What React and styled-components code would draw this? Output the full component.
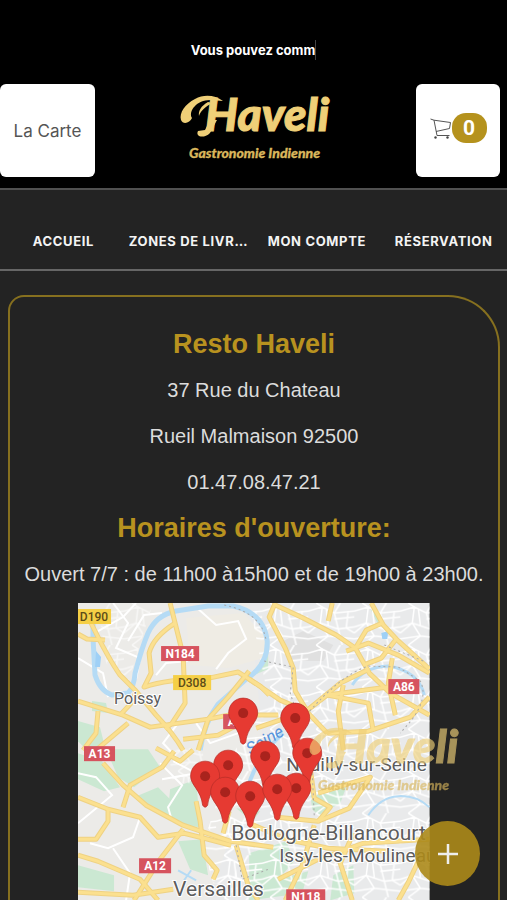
import styled, { createGlobalStyle } from "styled-components";

const GlobalStyle = createGlobalStyle`
  * {
    box-sizing: border-box;
  }
  body {
    margin: 0;
    background-color: #232323;
  }
`;

const Page = styled.div`
  display: flex;
  flex-direction: column;
  height: 100vh;
  overflow: hidden;
  background-color: #232323;
  font-family: Inter, "Liberation Sans", sans-serif;
`;

const Header = styled.header`
  background-color: black;
  border-bottom: 2px solid #505050;
  padding: 40px 0px 11px;
`;

const Announcement = styled.p`
  display: flex;
  justify-content: center;
  margin: 0px 0px 24px;
  color: white;
  font-size: 13px;
  font-weight: 700;
  line-height: 20px;
`;

const Caret = styled.span`
  width: 1px;
  background-color: #444;
`;

const HeaderRow = styled.div`
  display: grid;
  grid-template-columns: 1fr auto 1fr;
  align-items: start;
`;

const TileButton = styled.button`
  display: flex;
  align-items: center;
  justify-content: center;
  justify-self: ${(props) => props.$side};
  width: ${(props) => (props.$side === "start" ? "95px" : "84px")};
  height: 93px;
  margin-right: ${(props) => (props.$side === "start" ? "0px" : "7px")};
  padding: ${(props) => (props.$side === "start" ? "0px" : "0px 0px 5px")};
  border: none;
  border-radius: 6px;
  background-color: white;
  color: #555;
  font-family: inherit;
  font-size: 17px;
`;

const Count = styled.span`
  width: 35px;
  border-radius: 14px;
  background-color: #b5921d;
  color: white;
  font-family: Roboto, sans-serif;
  font-size: 21px;
  font-weight: 700;
  line-height: 30px;
`;

const LogoLink = styled.a`
  display: block;
  margin-top: 9px;
  height: 70px;
`;

const FloatingLogo = styled.div`
  position: fixed;
  right: 49px;
  bottom: 105px;
  height: 70px;
  opacity: 0.65;
`;

const Nav = styled.nav`
  display: grid;
  grid-template-columns: repeat(4, 1fr);
  padding: 39px 0px 15px;
  border-bottom: 2px solid #666;
`;

const NavLink = styled.a`
  padding: 0px 2px;
  overflow: hidden;
  text-overflow: ellipsis;
  white-space: nowrap;
  text-align: center;
  text-decoration: none;
  color: #f4f4f4;
  font-size: 13px;
  font-weight: 700;
  letter-spacing: 0.05em;
  line-height: 25px;
`;

const Card = styled.main`
  flex: 1;
  min-height: 0;
  display: flex;
  flex-direction: column;
  align-items: center;
  margin: 24px 7px 0px 8px;
  padding-top: 24px;
  border: 2px solid #86701f;
  border-bottom: none;
  border-radius: 16px 52px 0px 0px;
  font-family: "Liberation Sans", sans-serif;
  text-align: center;
`;

const Title = styled.h2`
  margin: 0;
  color: #b8921f;
  font-size: 27px;
  line-height: 46px;
`;

const Info = styled.p`
  margin: 0;
  color: #dcdcdc;
  font-size: 20px;
  line-height: 46px;
`;

const MapFrame = styled.div`
  flex: 1;
  min-height: 0;
  width: 72%;
  margin-top: 6px;

  svg {
    display: block;
    width: 100%;
    height: 100%;
  }
`;

const AddButton = styled.button`
  position: fixed;
  right: 27px;
  bottom: 14px;
  display: flex;
  align-items: center;
  justify-content: center;
  width: 65px;
  height: 65px;
  padding: 0;
  border: none;
  border-radius: 50%;
  background-color: rgba(172, 138, 26, 0.9);
`;

const navItems = ["ACCUEIL", "ZONES DE LIVRAISON", "MON COMPTE", "RÉSERVATION"];

const pins = [
  [165, 110],
  [217, 115],
  [229, 150],
  [187, 153],
  [150, 162],
  [127, 173],
  [147, 189],
  [172, 193],
  [218, 185],
  [199, 186],
];

const badges = [
  { text: "D190", x: -1, y: 6, w: 34, yellow: true },
  { text: "N184", x: 83, y: 43, w: 38 },
  { text: "D308", x: 95, y: 72, w: 38, yellow: true },
  { text: "A86", x: 310, y: 76, w: 31 },
  { text: "A", x: 145, y: 111, w: 17 },
  { text: "A13", x: 6, y: 143, w: 31 },
  { text: "A12", x: 61, y: 255, w: 32 },
  { text: "N118", x: 208, y: 286, w: 39 },
];

const towns = [
  { text: "Poissy", x: 36, y: 101, size: 16 },
  { text: "Neuilly-sur-Seine", x: 208, y: 168, size: 19 },
  { text: "Boulogne-Billancourt", x: 153, y: 237, size: 21 },
  { text: "Issy-les-Moulineaux", x: 201, y: 259, size: 19 },
  { text: "Versailles", x: 95, y: 293, size: 21 },
];

const majorRoads = [
  // north west
  "M13 20 Q30 55 42 72 L58 88 L78 112 Q95 130 105 147",
  "M0 31 L9 36 L27 37",
  "M92 0 L97 20 L105 52 L107 100 L94 120 L87 126",
  "M97 20 Q75 34 71 50 L73 70 L66 84 Q90 76 126 76 L160 69 L182 83 L191 92",
  "M0 98 L45 112 L72 124 L130 116 L150 112 L200 112",
  "M20 108 L18 130 L5 147",
  "M42 112 L55 98 L58 88",
  "M105 136 L140 132 L178 112",
  "M171 68 L150 94 L130 116 L120 147",
  "M50 120 L18 147",
  // north east
  "M197 0 L191 14 L207 45 L215 65 L217 88 L230 110",
  "M197 2 L225 15 L258 32 L277 45 L291 70 L312 90 L351 112",
  "M254 0 L250 18",
  "M293 0 L305 22 L318 36 L351 66",
  "M304 20 L288 27 L276 47",
  "M268 48 L290 40 L320 52 L351 70",
  "M318 36 L303 55 L285 62",
  "M171 76 L202 97 L228 108 L249 130",
  "M178 125 L228 108 L262 80 L291 66",
  "M228 108 L249 92 L310 84 L330 80",
  "M265 82 L260 108 L265 147",
  "M314 55 L310 80 L317 112",
  "M351 94 L332 114 L290 128 L249 130",
  "M249 92 L290 100 L295 128",
  // south west
  "M25 160 L45 182 L68 202 L105 222 L152 238 L195 244",
  "M0 194 L30 206 L62 214 L80 234 L106 230 L130 236 L153 242",
  "M45 204 L52 182 L84 164 L96 148",
  "M0 236 L18 236 L30 218 L30 206",
  "M105 226 L82 256 L56 297",
  "M0 252 L20 258 L62 276 L80 297",
  "M0 289 L55 292 L95 286",
  "M118 198 L122 218 L126 252 L139 267 L135 276",
  "M78 145 L102 158 L115 147",
  "M145 230 L151 208",
  "M158 242 L170 282 L180 297",
  // south east
  "M199 214 L240 218 L252 204 L236 195 L232 165",
  "M240 218 L271 205 L292 174 L240 190",
  "M171 220 L208 236 L250 245 L308 248",
  "M236 222 L224 262 L207 297",
  "M275 230 L262 260 L274 297",
  "M200 276 L240 256 L285 240 L351 236",
  "M340 258 L330 279 L320 297",
];

const minorRoads = [
  "M35 0 L50 20 L38 45 L62 55 L58 76",
  "M58 0 L45 14 L20 28",
  "M0 55 L25 70 L30 94",
  "M119 5 L138 22 L160 18 L168 36 L150 50 L138 66",
  "M84 10 L66 12 L50 38",
  "M78 72 L88 60 L110 58",
  "M0 170 L18 174 L34 192 L0 220",
  "M62 214 L55 234 L30 245 L12 240",
  "M82 160 L104 182 L90 204 L94 218",
  "M95 158 L118 170 L84 176",
  "M35 245 L52 270 L48 297",
  "M100 120 L85 140 L100 156",
  "M118 120 L132 140 L160 130",
];

const Logo = () => (
  <svg
    width="150"
    height="70"
    viewBox="0 0 150 70"
    overflow="visible"
    role="img"
    aria-label="Haveli"
    fontFamily="Lato"
    fontWeight="900"
    fontStyle="italic"
  >
    <g fill="#efcf78">
      <path d="M44 8 C36 2 25 1 16 6 C6 11 0 20 2 27 C4 32 11 30 13 25 C9 18 18 7 31 7 C36 7 40 8 44 8 Z" />
      <path d="M29 9 C22 13 19 18 20 23 C21 19 26 13 34 10 Z" />
      <path d="M19 38 C16 44 25 46 31 40 L38 27 L31 27 L26 37 Z" />
    </g>
    <text x="26" y="38" fill="#efcf78" stroke="#efcf78" strokeWidth="1" fontSize="46">
      Haveli
    </text>
    <text x="10" y="65" fill="#d9b65c" stroke="#d9b65c" strokeWidth="0.3" fontSize="14">
      Gastronomie Indienne
    </text>
  </svg>
);

const CartIcon = () => (
  <svg width="22" height="22" viewBox="0 0 22 22" fill="none" stroke="#555">
    <path d="M0.5 2 L4 3.2 L20.5 5.5 L19.5 11.5 L6 14.5 M4 3.2 L7 18.5 L19.5 18.5" />
    <circle cx="5.5" cy="20.5" r="1.2" fill="#444" stroke="none" />
    <circle cx="17.5" cy="20.5" r="1.2" fill="#444" stroke="none" />
  </svg>
);

const DeliveryMap = () => (
  <svg viewBox="0 0 351 297" preserveAspectRatio="xMidYMin slice" fontFamily="Roboto">
    <defs>
      <pattern id="streets" width="46" height="42" patternUnits="userSpaceOnUse">
        <path
          d="M0 8 L14 4 L26 10 L46 8 M0 24 L12 20 L30 26 L46 24 M0 36 L20 33 L46 36 M8 0 L14 4 L12 20 L20 33 L8 42 M32 0 L26 10 L30 26 L34 42 M40 8 L38 25 L46 30 M0 30 L12 20 M18 6 L20 22 M26 16 L46 14"
          fill="none"
          stroke="#fff"
          strokeWidth="1.5"
        />
      </pattern>
    </defs>
    <rect width="351" height="297" fill="#ecebe8" />
    <path d="M171 0 H351 V297 H130 L150 240 L190 190 Z" fill="#e9eaeb" />
    <path d="M108 15 L165 10 L188 35 L185 55 L150 65 L112 62 Z" fill="#efece4" />
    <path d="M205 38 L225 28 L255 42 L245 58 L212 58 Z" fill="#e0e0e0" />
    <g fill="#cbe8d2">
      <path d="M0 118 L22 124 L26 140 L10 148 L0 138 Z" />
      <path d="M14 98 L28 100 L30 110 L14 108 Z" />
      <path d="M28 146 L70 146 L82 164 L56 184 L40 174 Z" />
      <path d="M0 150 L24 158 L42 184 L26 188 L0 176 Z" />
      <path d="M56 194 L80 184 L106 210 L98 220 L68 204 Z" />
      <path d="M92 186 L118 176 L122 224 L104 222 L90 208 Z" />
      <path d="M100 238 L124 236 L130 272 L112 266 Z" />
      <path d="M0 262 L36 272 L36 288 L0 284 Z" />
      <path d="M232 190 L270 178 L262 200 L240 212 L234 206 Z" />
      <path d="M158 205 L182 208 L174 218 Z" />
      <path d="M171 250 L208 238 L216 258 L200 276 L230 268 L224 290 L171 297 Z" />
      <path d="M182 58 L190 48 L190 66 L176 72 Z" />
      <path d="M292 6 L304 14 L300 22 Z" />
      <path d="M255 272 L275 262 L276 290 L252 297 Z" />
    </g>
    <path d="M171 0 H351 V297 H145 L160 262 L130 225 L155 150 L190 95 Z" fill="url(#streets)" />
    <path d="M20 0 H75 L50 80 L28 60 Z M90 145 H125 V180 H95 Z" fill="url(#streets)" opacity="0.6" />
    <path d="M124 240 L160 244 L175 284 L135 280 Z" fill="url(#streets)" />
    <g fill="none" stroke="#fff" strokeWidth="2">
      {minorRoads.map((d) => (
        <path key={d} d={d} />
      ))}
    </g>
    <g fill="none" stroke="#b5dbf5" strokeWidth="5" strokeLinejoin="round">
      <path d="M15 12 L15 35 L17 72 Q22 88 34 92 L50 90 Q56 84 57 70 Q64 44 70 30 Q78 12 98 8 L130 3 L155 3 Q186 10 189 38 Q190 62 168 76 L140 101 Q126 120 122 147" />
      <path d="M168 190 Q176 156 205 130" strokeWidth="4" />
      <path d="M232 180 Q230 168 240 160" strokeWidth="3" />
      <path d="M274 82 Q285 64 310 63 Q340 68 346 92" strokeWidth="3" />
      <path d="M290 212 Q302 194 320 193 Q338 192 351 204" strokeWidth="2" />
      <path d="M100 267 L118 277 M106 277 L113 267" strokeWidth="2" />
    </g>
    <path d="M18 48 L23 54 L22 64 L17 64 Z M303 30 L310 28 L309 36 L304 36 Z" fill="#9fd0f6" />
    <g fill="none" stroke="#efd283" strokeWidth="5" strokeLinejoin="round">
      {majorRoads.map((d) => (
        <path key={d} d={d} />
      ))}
    </g>
    <g fill="none" stroke="#fbe08f" strokeWidth="3" strokeLinejoin="round">
      {majorRoads.map((d) => (
        <path key={d} d={d} />
      ))}
    </g>
    <path
      d="M146 2 Q184 10 188 38 M186 58 L215 64 L212 90 L222 120 M228 112 Q262 72 290 63 L320 64 L342 78 Q350 94 334 116 L322 130 M306 42 L345 58 M234 170 L236 212 M158 242 L164 276 L190 266"
      fill="none"
      stroke="#aaa"
      strokeWidth="1"
      strokeDasharray="2 3"
    />
    <text
      x="172"
      y="152"
      fill="#5795dc"
      fontSize="17"
      fontStyle="italic"
      transform="rotate(-30 172 152)"
    >
      Seine
    </text>
    {badges.map((badge) => (
      <g key={badge.text}>
        <rect
          x={badge.x}
          y={badge.y}
          width={badge.w}
          height="15"
          fill={badge.yellow ? "#f5cf46" : "#d6535e"}
        />
        <text
          x={badge.x + badge.w / 2}
          y={badge.y + 12}
          textAnchor="middle"
          fontSize="12"
          fontWeight={badge.yellow ? 500 : 700}
          fill={badge.yellow ? "#5c4c18" : "#fff"}
        >
          {badge.text}
        </text>
      </g>
    ))}
    {towns.map((town) => (
      <text
        key={town.text}
        x={town.x}
        y={town.y}
        fontSize={town.size}
        fill="#5c5c5c"
        stroke="#fff"
        strokeWidth="2"
        paintOrder="stroke"
      >
        {town.text}
      </text>
    ))}
    {pins.map(([x, y]) => (
      <g key={`${x}-${y}`} transform={`translate(${x} ${y})`}>
        <path
          d="M0 -15 C-8 -15 -14.5 -8.500 -14.5 0 C-14.5 9 -4 14 -2.500 29 Q0 33 2.500 29 C4 14 14.5 9 14.5 0 C14.5 -8.500 8 -15 0 -15 Z"
          fill="#e63a32"
          stroke="#b52c27"
          strokeWidth="0.7"
        />
        <circle r="5" fill="#a9231d" />
      </g>
    ))}
  </svg>
);

const App = () => {
  return (
    <Page>
      <GlobalStyle />
      <Header>
        <Announcement>
          Vous pouvez comm
          <Caret />
        </Announcement>
        <HeaderRow>
          <TileButton $side="start">La Carte</TileButton>
          <LogoLink href="#">
            <Logo />
          </LogoLink>
          <TileButton $side="end" aria-label="Panier">
            <CartIcon />
            <Count>0</Count>
          </TileButton>
        </HeaderRow>
      </Header>
      <Nav>
        {navItems.map((item) => (
          <NavLink href="#" key={item}>
            {item}
          </NavLink>
        ))}
      </Nav>
      <Card>
        <Title>Resto Haveli</Title>
        <Info>37 Rue du Chateau</Info>
        <Info>Rueil Malmaison 92500</Info>
        <Info>01.47.08.47.21</Info>
        <Title>Horaires d'ouverture:</Title>
        <Info>Ouvert 7/7 : de 11h00 à15h00 et de 19h00 à 23h00.</Info>
        <MapFrame>
          <DeliveryMap />
        </MapFrame>
      </Card>
      <FloatingLogo>
        <Logo />
      </FloatingLogo>
      <AddButton aria-label="Ajouter">
        <svg width="20" height="20" viewBox="0 0 20 20" stroke="#eee" strokeWidth="2.500">
          <path d="M10 0 V20 M0 10 H20" />
        </svg>
      </AddButton>
    </Page>
  );
};

export default App;
